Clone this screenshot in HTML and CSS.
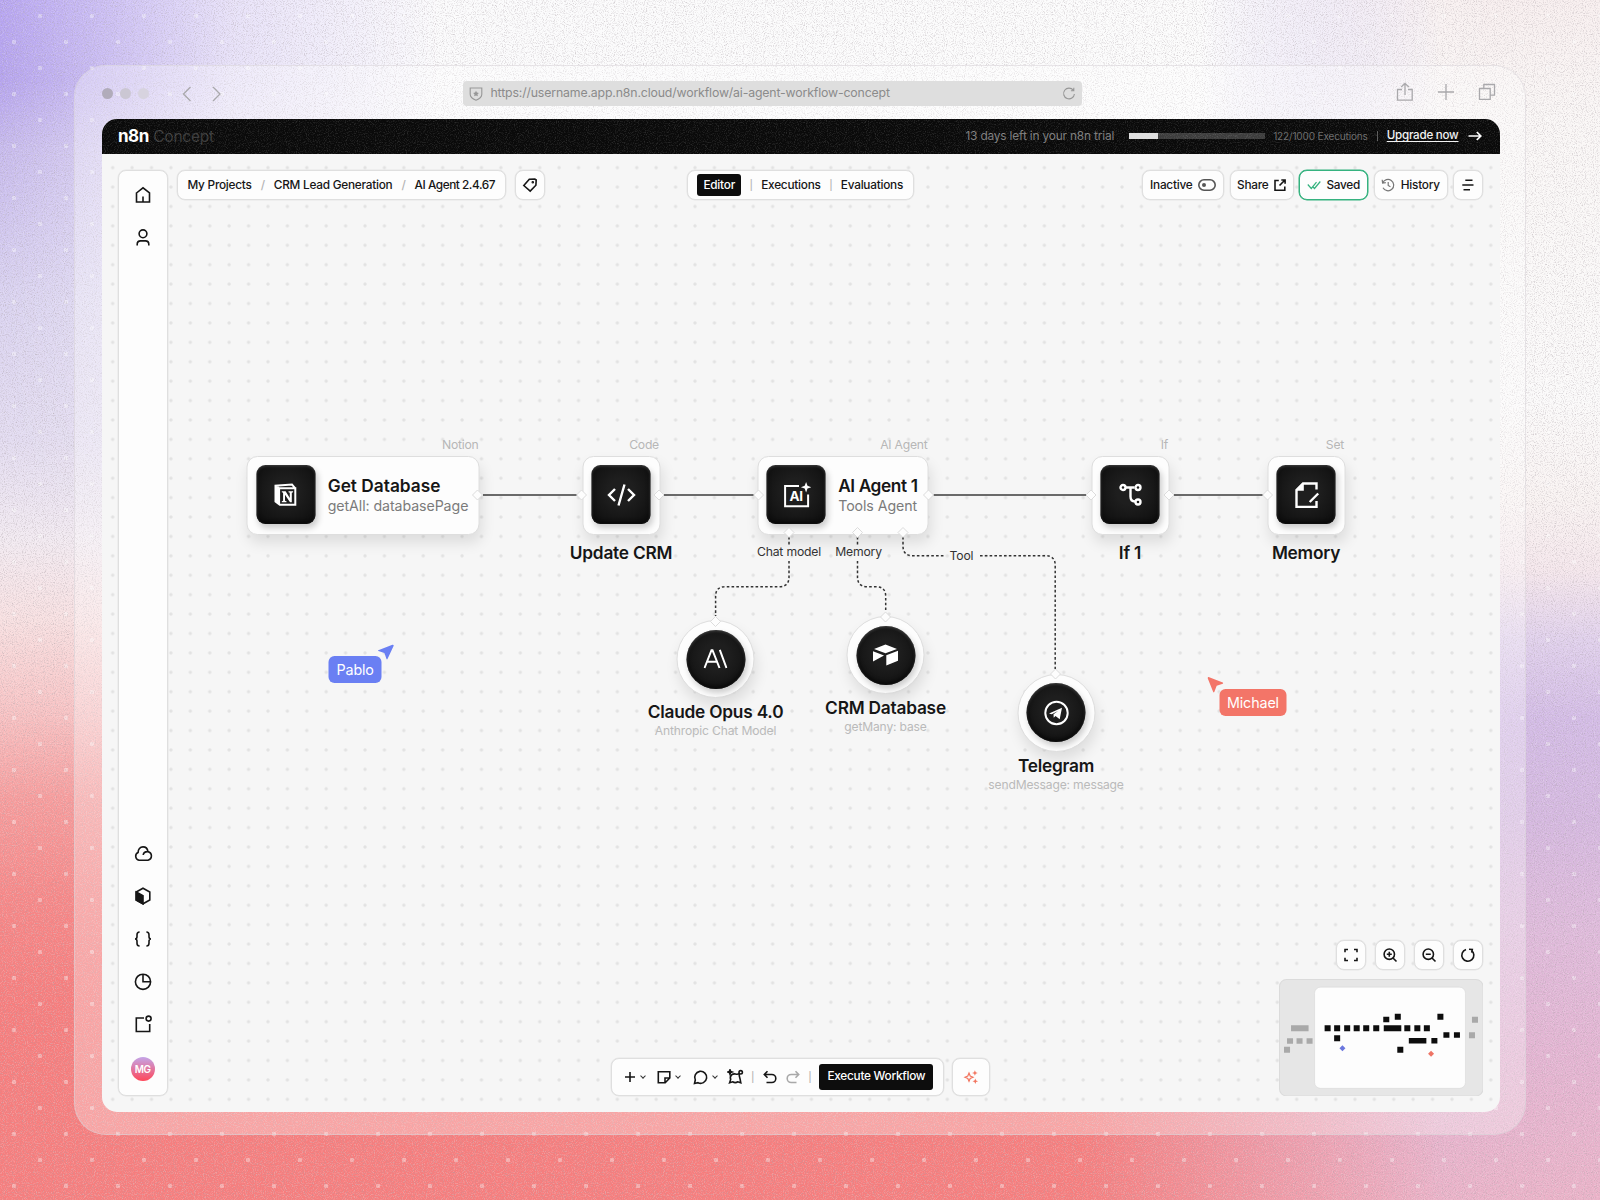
FILE: index.html
```html
<!DOCTYPE html>
<html lang="en">
<head>
<meta charset="utf-8">
<title>n8n Concept</title>
<link rel="stylesheet" href="styles.css">
</head>
<body>
<div class="backdrop">
  <div class="wash wash-left"></div>
  <div class="wash wash-right"></div>
  <div class="wash wash-top"></div>
  <svg class="fill" width="1600" height="1200">
    <defs>
      <pattern id="sparks" x="12" y="40" width="52" height="52" patternUnits="userSpaceOnUse">
        <rect x="0" y="0" width="4" height="4" rx="1" fill="#fff" fill-opacity=".38"/>
        <rect x="26" y="26" width="4" height="4" rx="1" fill="#fff" fill-opacity=".38"/>
      </pattern>
      <filter id="grain-dark" x="0" y="0" width="100%" height="100%">
        <feTurbulence type="fractalNoise" baseFrequency=".9" numOctaves="2" seed="4"/>
        <feColorMatrix values="0 0 0 0 .4  0 0 0 0 .35  0 0 0 0 .38  1.3 0 0 0 -.62"/>
      </filter>
      <filter id="grain-light" x="0" y="0" width="100%" height="100%">
        <feTurbulence type="fractalNoise" baseFrequency=".9" numOctaves="2" seed="9"/>
        <feColorMatrix values="0 0 0 0 1  0 0 0 0 1  0 0 0 0 1  3 0 0 0 -1.4"/>
      </filter>
    </defs>
    <rect width="1600" height="1200" fill="url(#sparks)"/>
    <rect width="1600" height="1200" filter="url(#grain-dark)"/>
    <rect width="1600" height="1200" filter="url(#grain-light)" opacity=".22"/>
  </svg>
</div>

<div class="window">
  <header class="chrome">
    <div class="lights"><i></i><i></i><i></i></div>
    <svg class="nav" width="40" height="16" viewBox="0 0 40 16"><path d="M8.500 1 1.500 8l7 7M31 1l7 7-7 7"/></svg>
    <div class="address">
      <svg width="14" height="14" viewBox="0 0 14 14"><path d="M1.200 1h11.600v6.200c0 3-2.600 4.700-5.800 6-3.200-1.300-5.800-3-5.800-6z"/><path class="solid" d="m7 3.800.9 1.800 2 .3-1.400 1.400.3 2L7 8.400l-1.800.9.3-2-1.400-1.400 2-.3z"/></svg>
      <span>https://username.app.n8n.cloud/workflow/ai-agent-workflow-concept</span>
      <svg class="reload" width="14" height="14" viewBox="0 0 14 14"><path d="M11.300 3.200A5.400 5.400 0 1 0 12.400 7M11.800.8v2.900H8.900"/></svg>
    </div>
    <div class="chrome-actions">
      <svg width="18" height="20" viewBox="0 0 18 20"><path d="M6 7.500H1.500v10.700h14.700V7.500H12M9 13V1.500M5.200 5 9 1.300 12.800 5"/></svg>
      <svg width="18" height="18" viewBox="0 0 18 18"><path d="M9 1v16M1 9h16"/></svg>
      <svg width="18" height="18" viewBox="0 0 18 18"><path d="M1.500 5.500h10.700v10.800H1.500zM5.800 5.500V1.500h10.700v10.700h-4.300"/></svg>
    </div>
  </header>

  <div class="app">
    <div class="trial">
      <svg class="bar-grain" width="1398" height="35"><rect width="1398" height="35" filter="url(#grain-light)" opacity=".13"/></svg>
      <b>n8n</b><span class="concept">Concept</span>
      <span class="left">13 days left in your n8n trial</span>
      <span class="meter"><i></i></span>
      <span class="count">122/1000 Executions</span>
      <span class="bar"></span>
      <a>Upgrade now</a>
      <svg class="arrow" width="14" height="12" viewBox="0 0 14 12"><path d="M.5 6h12M8.800 2 12.800 6l-4 4"/></svg>
    </div>

    <div class="workspace">
      <div class="flow">
        <svg class="wires" width="1600" height="1200">
          <defs>
            <pattern id="grid" x="111.200" y="165.700" width="19.410" height="19.410" patternUnits="userSpaceOnUse">
              <circle cx="2" cy="2" r="1.700" fill="#e2e2e2"/>
            </pattern>
          </defs>
          <rect x="104" y="160" width="1396" height="950" fill="url(#grid)"/>
          <path class="wire" d="M483.500 495H578M664 495h91M934 495h153M1174 495h90"/>
          <path class="dash" d="M789.500 537v8M789.500 561v16q0 9.700-9.700 9.700h-54q-9.700 0-9.700 9.700V616"/>
          <path class="dash" d="M858 537v8M858 561v16q0 9.700 9.700 9.700h8.800q9.700 0 9.700 9.700V612"/>
          <path class="dash" d="M903.500 537v9q0 9.700 9.700 9.700H945M980.500 555.700h65.500q9.700 0 9.700 9.700V669"/>
        </svg>

        <div class="node" style="left:247px;top:455.500px;width:233px">
          <em>Notion</em>
          <div class="tile"><svg width="24" height="24" viewBox="0 0 24 24"><path class="s" d="M4.800 5.300h17v16.500H6.300L2 18.500V2.800L18.500 1.600l3.300 3.700M2 2.600l3.600 2.700v16"/><path d="M1.500 2.500 5.800 5.500V21L1.500 17.800z"/><path d="M8.300 8.300h3.800l4.200 6.600V9.800l-1.300-.5v-1h4.600v1l-1.300.5v9.500h-1.800l-5-7.600v6l1.500.5v1H8.300v-1l1.300-.5V9.800l-1.300-.5z"/></svg></div>
          <div class="caption"><h3 class="loose">Get Database</h3><p>getAll: databasePage</p></div>
        </div>

        <div class="node" style="left:582.500px;top:455.500px">
          <em>Code</em>
          <div class="tile"><svg width="30" height="24" viewBox="0 0 30 24"><path class="s thick" d="M8.500 6 2.500 12l6 6M21.500 6l6 6-6 6M18 1.500l-6 21"/></svg></div>
          <h3 class="under">Update CRM</h3>
        </div>

        <div class="node" style="left:757.500px;top:455.500px;width:171.500px">
          <em>AI Agent</em>
          <div class="tile"><svg class="ai" width="30" height="28" viewBox="0 0 30 28"><path class="s" d="M17.500 5H3.600v20.300h23V13.500"/><path d="m24.600 1 1.400 3.800 3.800 1.400L26 7.600l-1.400 3.800-1.400-3.800-3.800-1.400 3.800-1.400z"/><text x="8" y="20.300">AI</text></svg></div>
          <div class="caption"><h3 class="tight">AI Agent 1</h3><p>Tools Agent</p></div>
        </div>

        <div class="node" style="left:1091.500px;top:455.500px">
          <em>If</em>
          <div class="tile"><svg width="24" height="24" viewBox="0 0 24 24"><path class="s thick" d="M7 4.500h9M12 4.500v9c0 3.500 2 5 4.500 5"/><g class="s thick"><circle cx="4.500" cy="4.500" r="2.500"/><circle cx="19.500" cy="4.500" r="2.500"/><circle cx="19.500" cy="19" r="2.500"/></g></svg></div>
          <h3 class="under">If 1</h3>
        </div>

        <div class="node" style="left:1267.500px;top:455.500px">
          <em>Set</em>
          <div class="tile"><svg width="26" height="26" viewBox="0 0 26 26"><path class="s thick" d="M23 7.500V1.500H9.500L3 8v17h20v-6"/><path d="M10.300 1v7.700H2.500z"/><path class="s thick" d="m24.700 11.500-8.500 8.500"/></svg></div>
          <h3 class="under">Memory</h3>
        </div>

        <div class="node round" style="left:677px;top:620px">
          <div class="tile"><svg width="24" height="20" viewBox="0 0 24 20"><path class="s" d="M1 19 8 1.200h1L16 19M3.500 12.800h10M16.300.8 23 19"/></svg></div>
          <div class="under"><h3>Claude Opus 4.0</h3><p>Anthropic Chat Model</p></div>
        </div>
        <div class="node round" style="left:847px;top:616px">
          <div class="tile"><svg width="26" height="24" viewBox="0 0 26 24"><path d="M1.500 6 13 1.500 24.500 6 13 10.300zM.500 8.300l11 4.200L.5 18.500zM13.800 12.300l11.700-4.500v10L13.800 22.500z"/></svg></div>
          <div class="under"><h3>CRM Database</h3><p>getMany: base</p></div>
        </div>
        <div class="node round" style="left:1017.500px;top:673.500px">
          <div class="tile"><svg width="26" height="26" viewBox="0 0 26 26"><circle class="s" cx="13" cy="13" r="11.200"/><path d="m5.500 13.500 13-5.700-2.300 11.400-4.200-3.200-1.800 1.800-.2-3.500 4.500-3.300-6.300 3.200z"/></svg></div>
          <div class="under"><h3>Telegram</h3><p>sendMessage: message</p></div>
        </div>

        <svg class="wires ports" width="1600" height="1200">
          <defs><path id="port" d="M0-5 5 0 0 5-5 0z"/></defs>
          <use href="#port" x="478" y="495"/><use href="#port" x="582" y="495"/><use href="#port" x="659.500" y="495"/><use href="#port" x="759" y="495"/><use href="#port" x="929" y="495"/><use href="#port" x="1091.500" y="495"/><use href="#port" x="1169.500" y="495"/><use href="#port" x="1268" y="495"/>
          <use href="#port" x="789.500" y="532.500"/><use href="#port" x="858" y="532.500"/><use href="#port" x="903.500" y="532.500"/><use href="#port" x="716" y="621.500"/><use href="#port" x="886" y="617"/><use href="#port" x="1056" y="674"/>
        </svg>

        <span class="tag" style="left:789.500px;top:552px">Chat model</span>
        <span class="tag" style="left:859px;top:552px">Memory</span>
        <span class="tag" style="left:962px;top:556px">Tool</span>

        <svg class="pointer" style="left:377px;top:643px" width="18" height="18" viewBox="0 0 18 18"><path fill="#6a7ff3" d="M15.900 1.700 1.800 7.200Q1 7.700 1.900 8.100l6 1.800 2.100 6.200q.5.900 1 0L17.200 2.800q.2-1.200-1.300-1.100z"/></svg>
        <span class="who blue" style="left:329px;top:656px">Pablo</span>
        <svg class="pointer" style="left:1206.500px;top:676px" width="18" height="18" viewBox="0 0 18 18"><path fill="#f37568" d="m2.100 1.100 14.200 5.500q.9.600 0 1.200l-6.100 2-2.400 6.300q-.6.900-1.100 0L1.200 2.200q0-1.200.9-1.100z"/></svg>
        <span class="who red" style="left:1219.500px;top:688.500px">Michael</span>
      </div>

      <nav class="side panel">
        <svg width="18" height="18" viewBox="0 0 18 18"><path d="M2.500 7 9 1.800 15.500 7v9H2.500zM9 16v-5.500"/></svg>
        <svg width="18" height="18" viewBox="0 0 18 18"><circle cx="9" cy="4.800" r="3.900"/><path d="M3.200 16.500v-1.200q0-3.400 3.400-3.400h4.800q3.400 0 3.400 3.400v1.200"/></svg>
        <div class="spacer"></div>
        <svg width="20" height="18" viewBox="0 0 20 18"><path d="M6 15.200a4 4 0 0 1-.9-7.600C5.100 4.300 7 1.900 10 1.900s4.600 2.200 4.900 4.700a4.400 4.400 0 0 1 .1 8.600zM10.200 10c.3-2.200 2.300-3.500 4.700-3.400"/></svg>
        <svg width="18" height="18" viewBox="0 0 18 18"><path d="M9 1.200 15.800 5v8L9 16.800 2.200 13V5z"/><path class="solid" d="M2.200 5 9 8.800v8L2.200 13z"/></svg>
        <svg width="18" height="18" viewBox="0 0 18 18"><path d="M5.600 2C3.400 2 3 3 3 4.800v2C3 8.200 2.400 9 1 9c1.400 0 2 .8 2 2.200v2C3 15 3.400 16 5.600 16M12.400 2C14.600 2 15 3 15 4.800v2C15 8.200 15.600 9 17 9c-1.400 0-2 .8-2 2.200v2c0 1.800-.4 2.800-2.600 2.800"/></svg>
        <svg width="18" height="18" viewBox="0 0 18 18"><circle cx="9" cy="8.800" r="7.600"/><path d="M9 1v7.800h7.700"/></svg>
        <svg width="18" height="18" viewBox="0 0 18 18"><path d="M10 3H2.300v13.500h13.400V9"/><circle cx="14.600" cy="3.600" r="2.500"/></svg>
        <span class="avatar">MG</span>
      </nav>

      <div class="main">
        <div class="row">
          <div class="panel crumbs"><span>My Projects</span><u>/</u><span>CRM Lead Generation</span><u>/</u><span class="tight">AI Agent 2.4.67</span></div>
          <div class="panel square"><svg width="16" height="16" viewBox="0 0 16 16"><path d="M1.800 8.500 7.300 2.200l5.500-.2 1.400 1-.3 5.200-5.700 5.900z"/><circle class="solid" cx="10.800" cy="5.200" r=".5"/></svg></div>
          <div class="panel tabs"><span class="on">Editor</span><u>|</u><span>Executions</span><u>|</u><span>Evaluations</span></div>
          <div class="tools">
            <div class="panel" style="width:82px"><span>Inactive</span><svg class="grey" width="18" height="12" viewBox="0 0 18 12"><rect x=".8" y=".8" width="16.400" height="10.400" rx="5.200"/><circle class="solid" cx="6" cy="6" r="2"/></svg></div>
            <div class="panel" style="width:64px"><span>Share</span><svg width="12" height="12" viewBox="0 0 12 12"><path d="M4.800 1.500H1v9.800h9.800V7.500M7.300 1h3.800v3.800M11 1 5.500 6.500"/></svg></div>
            <div class="panel saved" style="width:69px"><svg width="14" height="10" viewBox="0 0 14 10"><path d="m.8 4.500 3.500 4L9.500 2.200M5.500 6.500l2 2L13.300 1.500"/></svg><span>Saved</span></div>
            <div class="panel" style="width:74px"><svg class="grey thin" width="14" height="14" viewBox="0 0 14 14"><path d="M1.700 5A5.700 5.700 0 1 1 2 9.800M1.200 1.800 1.600 5l3.200-.3M7.200 4v3.400l2.200 1.300"/></svg><span>History</span></div>
            <div class="panel square"><svg width="14" height="12" viewBox="0 0 14 12"><path d="M4.300 1.200h7.200M1.300 6h11.200M2.500 10.800h6.500"/></svg></div>
          </div>
        </div>
        <div class="spacer"></div>
        <div class="bottom">
          <div class="panel actions">
            <svg width="12" height="12" viewBox="0 0 12 12"><path d="M6 1v10M1 6h10"/></svg><i class="chev"></i>
            <svg class="a2" width="14" height="14" viewBox="0 0 14 14"><path d="M1.300 1.800h11.500V8L8.200 12.800H1.300zM12.800 8H8v4.800"/></svg><i class="chev"></i>
            <svg class="a3" width="15" height="15" viewBox="0 0 15 15"><path d="M1.500 13.500 2.300 10A6 6 0 1 1 5 12.700z"/></svg><i class="chev"></i>
            <svg class="a4" width="17" height="16" viewBox="0 0 17 16"><circle cx="13.700" cy="3.300" r="1.700"/><path d="M8.500 4.900c1.500.6 2.900.2 3.900-.5M12.300 4.900c-.4 1.800.3 3.700.8 5.200l.7 3.700-3-1c-1.600 1-3.600.9-5.200 0l-3 1 1.100-3.400c-.7-1.700-.2-3.600.9-4.600 1.200-1 2.600-1 3.900-.9"/><path class="solid" d="M3 .8l.6 1.600 1.600.6-1.600.6L3 5.200l-.6-1.600L.8 3l1.600-.6z"/></svg>
            <u>|</u>
            <svg class="a5" width="14" height="14" viewBox="0 0 14 14"><path d="M1.500 4.500h7.300a4 4 0 0 1 0 8H3.500M4.500 1.200 1.300 4.500l3.200 3.300"/></svg>
            <svg class="a6 pale" width="14" height="14" viewBox="0 0 14 14"><path d="M12.500 4.500H5.200a4 4 0 0 0 0 8h5.300M9.500 1.200l3.200 3.300-3.200 3.300"/></svg>
            <u>|</u>
            <span class="execute">Execute Workflow</span>
          </div>
          <div class="panel spark"><svg width="16" height="16" viewBox="0 0 16 16"><path d="m6 4 1.200 3L10 8.200 7.200 9.400 6 12.200 4.800 9.400 2 8.200 4.800 7z"/><path class="solid" d="m11.900 1.200.8 2 2 .8-2 .8-.8 2-.8-2-2-.8 2-.8zM12.300 9.500l.8 2 2 .8-2 .8-.8 2-.8-2-2-.8 2-.8z"/></svg></div>
          <div class="overview">
            <div class="zooms">
              <div class="panel square"><svg width="16" height="16" viewBox="0 0 16 16"><path d="M2 5.300V2.500h3M11 2.500h3v2.800M14 10.700v2.800h-3M5 13.500H2v-2.800"/></svg></div>
              <div class="panel square"><svg width="16" height="16" viewBox="0 0 16 16"><circle cx="7.300" cy="7.200" r="5.200"/><path d="m11 11 3.500 3.500M7.300 4.700v5M4.800 7.200h5"/></svg></div>
              <div class="panel square"><svg width="16" height="16" viewBox="0 0 16 16"><circle cx="7.300" cy="7.200" r="5.200"/><path d="m11 11 3.500 3.500M4.800 7.200h5"/></svg></div>
              <div class="panel square"><svg width="16" height="16" viewBox="0 0 16 16"><path d="M6 2.500a6 6 0 1 0 5.300.8M9 2.200l3.300.2-.6 3.200"/></svg></div>
            </div>
            <svg class="minimap" width="204.500" height="117.500" viewBox="0 0 204 117">
              <rect x=".5" y=".5" width="203" height="116" rx="7" fill="#e6e6e6" stroke="#dbdbdb"/>
              <rect x="35.500" y="8" width="150.500" height="101" rx="6" fill="#fdfdfd" stroke="#d9d9d9" stroke-width=".6"/>
              <g fill="#a9a9a9"><path d="M12 46h17.500v6H12zM8 59h6v5.500H8zM17.500 59h6v5.500h-6zM27.500 59h6v5.500h-6zM5 67.500h6v6H5zM192.500 37.500h6v6h-6zM189.500 53h6v6h-6z"/></g>
              <path fill="#0d0d0d" d="M45.500 46h6v6h-6zM55 46h6v6h-6zM65 46h6v6h-6zM74.500 46h6v6h-6zM84 46h6v6h-6zM94 46h6v6h-6zM104.500 46H122v6h-17.500zM125 46h6v6h-6zM135 46h6v6h-6zM144.500 46h6v6h-6zM104 37.500h6v5.500h-6zM115.500 34.500h6v6h-6zM158 34.500h6v6h-6zM55 56h6v6h-6zM118 67.500h6v6h-6zM129.500 58.800H147v5.500h-17.500zM152 58.800h6v5.500h-6zM164 53h6v5.500h-6zM174.500 53h6v5.500h-6z"/>
              <path fill="#6b77de" d="m63.300 66 3 3-3 3-3-3z"/><path fill="#ee7465" d="m151.700 71.500 3 3-3 3-3-3z"/>
            </svg>
          </div>
        </div>
      </div>
    </div>
  </div>
</div>
</body>
</html>
```
FILE: styles.css
```css
* { box-sizing: border-box; }

body {
  margin: 0;
  width: 1600px;
  height: 1200px;
  overflow: hidden;
  font: 500 11.800px/1.2 Inter, "Liberation Sans", sans-serif;
  letter-spacing: -.24px;
  color: #161616;
}

i, em { font-style: normal; }
u { text-decoration: none; }
h3, p { margin: 0; }
svg { display: block; flex: none; }

/* Backdrop */
.backdrop { position: absolute; inset: 0; background: #f9f8f9; }
.wash, .fill { position: absolute; inset: 0; }
.wash-left {
  background: linear-gradient(to bottom, #b7a5f2 0, #b5a3ef 80px, #c7baee 150px, #dad3f1 300px, #e3dcf1 440px, #f2eaf1 540px, #f8e0e1 620px, #f8c3c4 710px, #f79b9b 800px, #f78686 900px, #f77c7c 1000px, #f77d7d 1200px);
}
.wash-right {
  background: linear-gradient(to bottom, #f8efef 0, #faf7f6 120px, #fbfafa 400px, #f9f3f2 500px, #f5e7ec 570px, #e0d0ec 640px, #d3bbe6 720px, #d5b8e0 820px, #dfbadb 930px, #e4b4d2 1060px, #ebb2c8 1200px);
  -webkit-mask-image: linear-gradient(to right, transparent 1080px, #000 1440px);
  mask-image: linear-gradient(to right, transparent 1080px, #000 1440px);
}
.wash-top {
  height: 560px;
  background: linear-gradient(to right, rgba(252, 251, 252, 0) 0, rgba(252, 251, 252, .25) 90px, rgba(252, 251, 252, .7) 230px, #fbfbfc 440px, #fcfcfc 1200px, rgba(252, 252, 252, 0) 1500px);
  -webkit-mask-image: linear-gradient(#000 200px, transparent);
  mask-image: linear-gradient(#000 200px, transparent);
}

/* Browser window */
.window {
  position: relative;
  width: 1452px;
  height: 1070px;
  margin: 65px 0 0 74px;
  padding: 0 25.500px 0 27px;
  border: 1px solid rgba(215, 210, 215, .55);
  border-radius: 32px;
  background: rgba(255, 255, 255, .3);
}
.chrome { display: flex; align-items: center; height: 53px; padding-top: 2px; }
.lights { display: flex; gap: 7px; width: 79.500px; }
.lights i { width: 11px; height: 11px; border-radius: 50%; background: #b1acba; }
.lights i:nth-child(2) { background: #cbc7d3; }
.lights i:nth-child(3) { background: #d7d3df; }
.chrome svg { fill: none; stroke: #a9a8ab; stroke-width: 1.300; }
.address {
  display: flex;
  align-items: center;
  width: 619px;
  height: 25px;
  margin-left: 241.500px;
  padding: 0 6px;
  border-radius: 4px;
  background: #dedede;
  color: #8b8b8b;
  font-size: 12.300px;
  font-weight: 400;
  letter-spacing: -.15px;
}
.address span { margin-left: 7.500px; }
.address svg { stroke: #979797; stroke-width: 1.100; }
.address .solid { fill: #979797; stroke: none; }
.address .reload { margin-left: auto; }
.chrome-actions { display: flex; align-items: center; gap: 23px; margin: -4px 4px 0 auto; }

/* App shell */
.app {
  width: 1398px;
  height: 993px;
  border-radius: 15px;
  overflow: hidden;
  background: #f6f6f6;
}
.trial {
  position: relative;
  display: flex;
  align-items: center;
  height: 35px;
  padding: 0 18.500px 1px 16px;
  background: #0a0a0a;
  color: #7d7d7d;
  font-weight: 400;
}
.bar-grain { position: absolute; inset: 0; }
.trial b { color: #fff; font-size: 17px; font-weight: 700; letter-spacing: -.500px; }
.concept { margin-left: 4.500px; padding-top: 2px; color: #3a3a3a; font-size: 15.600px; letter-spacing: -.300px; }
.left { margin-left: auto; font-size: 11.900px; letter-spacing: -.180px; }
.meter { width: 136px; height: 6px; margin-left: 15px; background: #3d3d3d; }
.meter i { display: block; width: 29px; height: 6px; background: #dedede; }
.count { margin-left: 8px; color: #6b6b6b; font-size: 10px; letter-spacing: -.140px; }
.bar { width: 1px; height: 10px; margin: 0 9px; background: #5c5c5c; }
.trial a { color: #f2f2f2; font-weight: 500; font-size: 11.600px; text-decoration: underline; text-underline-offset: 2px; }
.arrow { margin-left: 9px; fill: none; stroke: #fff; stroke-width: 1.700; }

.workspace { position: relative; display: flex; height: 958px; padding: 16px 17px 16px 16px; }
.panel {
  display: flex;
  align-items: center;
  justify-content: center;
  border: 1.500px solid #dfdfdf;
  border-radius: 8px;
  background: #fdfdfd;
  box-shadow: 0 0 0 .5px #e6e6e6;
}
.panel svg { fill: none; stroke: #161616; stroke-width: 1.600; }
.panel svg .solid { fill: #161616; }
.panel svg.grey { stroke: #555; }
.panel svg.grey .solid { fill: #555; stroke: none; }
.panel svg.thin { stroke: #777; stroke-width: 1.200; }
.panel svg.pale { stroke: #a9a9a9; }
.panel u { color: #b5b5b5; }
.spacer { flex: 1; }
.square { width: 30px; height: 30px; }

.side {
  position: relative;
  flex-direction: column;
  justify-content: flex-start;
  gap: 24.700px;
  width: 49.500px;
  padding: 15px 0 14px;
}
.avatar {
  display: grid;
  place-items: center;
  width: 24px;
  height: 24px;
  margin-top: -1px;
  border-radius: 50%;
  background: linear-gradient(#c4a5e8, #ff4759);
  color: #fff;
  font-size: 10px;
  font-weight: 600;
}

.main { position: relative; display: flex; flex-direction: column; flex: 1; margin-left: 9px; }
.row { display: flex; height: 30px; }
.crumbs { width: 329.500px; }
.crumbs u { margin: 0 9px; }
.crumbs .tight { letter-spacing: -.45px; }
.crumbs + .square { margin-left: 9px; }
.tabs { width: 227.500px; margin-left: 141.500px; }
.tabs u { margin: 0 8.500px; font-size: 10px; }
.tabs .on { padding: 4px 6px; border-radius: 3px; background: #0d0d0d; color: #fff; }
.tools { display: flex; gap: 5.500px; margin-left: auto; }
.tools .panel { gap: 5.500px; }
.tools .saved { border-color: #35b27f; box-shadow: 0 0 0 .5px #35b27f; }
.panel.saved svg { stroke: #35b27f; stroke-width: 1.200; }

.bottom { display: flex; align-items: flex-end; }
.actions { justify-content: flex-start; width: 333px; height: 38px; margin-left: 434px; padding-left: 12px; }
.chev { width: 4px; height: 4px; margin: -2px 0 0 5px; border: solid #333; border-width: 0 1.300px 1.300px 0; transform: rotate(45deg); }
.a2 { margin-left: 12.500px; }
.a3 { margin-left: 12.500px; }
.a4 { margin: 0 7px 0 10.500px; }
.a5 { margin: 0 9px 0 9px; }
.a6 { margin-right: 8px; }
.actions u { font-size: 10px; }
.execute { margin-left: 8px; padding: 5px 8px 6px; border-radius: 3px; background: #0d0d0d; color: #fff; font-weight: 450; letter-spacing: -.260px; white-space: nowrap; }
.spark { width: 38px; height: 38px; margin-left: 8.500px; }
.panel.spark svg { stroke: #f2755f; stroke-width: 1.200; }
.panel.spark .solid { fill: #f2755f; stroke: none; }
.overview { display: flex; flex-direction: column; align-items: flex-end; gap: 9px; margin-left: auto; }
.zooms { display: flex; gap: 9px; }

/* Flow canvas: nodes are placed at their own x/y */
.flow { position: absolute; left: 0; top: 0; transform: translate(-102.500px, -154px); }
.wires { position: absolute; left: 0; top: 0; fill: none; }
.wire { stroke: #3c3c3c; stroke-width: 1.600; }
.dash { stroke: #333; stroke-width: 1.500; stroke-dasharray: 2.600 2.200; }
.ports { fill: #fdfdfd; stroke: #dcdcdc; }
.node {
  position: absolute;
  display: flex;
  width: 78px;
  height: 79px;
  padding: 8.700px;
  border: 1px solid #dedede;
  border-radius: 11px;
  background: #fdfdfd;
  box-shadow: 2px 8px 14px rgba(0, 0, 0, .1);
}
.round, .round .tile { border-radius: 50%; }
.round { height: 78px; padding: 8.500px; }
.node em { position: absolute; right: 0; top: -18.500px; color: #b7b7b7; font-size: 12.200px; font-weight: 400; white-space: nowrap; }
.tile {
  display: grid;
  place-items: center;
  flex: none;
  width: 59px;
  height: 59px;
  border-radius: 9px;
  background: radial-gradient(circle at 50% 45%, #1e1e1e 30%, #111 80%);
  box-shadow: inset 0 1px 3px rgba(255, 255, 255, .22), inset 0 -2px 4px #050505, 2px 4px 6px rgba(0, 0, 0, .2);
}
.tile svg { fill: #fff; }
.tile .s { fill: none; stroke: #fff; stroke-width: 2; }
.tile .thick { stroke-width: 2.400; }
.ai text { font: 700 13.500px Inter, sans-serif; letter-spacing: -.300px; }
.node h3 { color: #161616; font-size: 17.300px; font-weight: 600; line-height: 20px; letter-spacing: -.220px; white-space: nowrap; }
.node .loose { letter-spacing: 0; }
.node .tight { letter-spacing: -.400px; }
.caption { margin: 10.500px 0 0 12.500px; }
.caption p { color: #7b7b7b; font-size: 14.200px; font-weight: 400; line-height: 20px; letter-spacing: -.080px; white-space: nowrap; }
.under { position: absolute; top: 86px; left: 50%; transform: translateX(-50%); text-align: center; }
.round .under { top: 81px; }
.under p { color: #bababa; font-size: 12.100px; font-weight: 400; line-height: 17px; letter-spacing: -.160px; white-space: nowrap; }
.tag { position: absolute; transform: translate(-50%, -50%); color: #333; font-size: 12.200px; font-weight: 400; letter-spacing: -.180px; white-space: nowrap; }
.pointer { position: absolute; }
.who { position: absolute; padding: 0 8px; border-radius: 6px; color: #fff; font-size: 14.300px; font-weight: 400; line-height: 27px; letter-spacing: -.130px; }
.blue { background: #6a7ff3; }
.red { background: #f37568; }
```
